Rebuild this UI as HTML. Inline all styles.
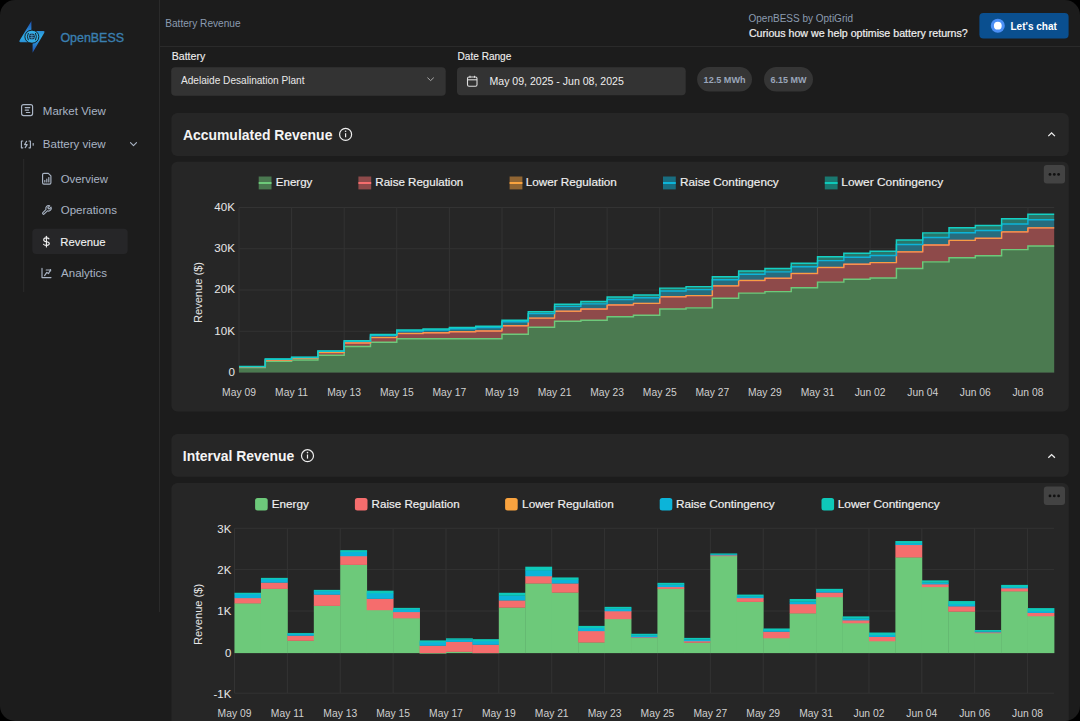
<!DOCTYPE html>
<html><head><meta charset="utf-8">
<style>
html,body{margin:0;padding:0;background:#000;width:1080px;height:721px;overflow:hidden;}
#app{position:absolute;left:0;top:0;width:1080px;height:721px;border-radius:15px;overflow:hidden;background:#1c1c1c;font-family:"Liberation Sans", sans-serif;}
svg{position:absolute;left:0;top:0;}
svg text{font-family:"Liberation Sans", sans-serif;}
</style></head><body>
<div id="app">
<svg width="1080" height="721" viewBox="0 0 1080 721">
<!-- sidebar -->
<rect x="159" y="0" width="1" height="612" fill="#2a2a2a"/>
<rect x="160" y="46" width="920" height="1" fill="#2a2a2a"/>
<!-- logo -->
<defs>
<linearGradient id="lg" x1="0" y1="0" x2="0" y2="1">
<stop offset="0" stop-color="#1c4cb0"/><stop offset="0.45" stop-color="#2ea6e2"/><stop offset="0.55" stop-color="#2ea6e2"/><stop offset="1" stop-color="#1c4cb0"/>
</linearGradient>
<radialGradient id="lg2"><stop offset="0" stop-color="#3ab4ea"/><stop offset="1" stop-color="#1f78c8"/></radialGradient>
</defs>
<path d="M31.4,21 L31.4,31 L43.4,31 Q45.2,31.2 44.3,32.8 L32.6,52.8 L32.6,42.2 L20.4,42.2 Q18.7,42 19.6,40.4 Z" fill="url(#lg)"/>
<rect x="24.9" y="30.3" width="13.9" height="12.8" rx="6.4" fill="#33ade6" stroke="#141414" stroke-width="0.9"/>
<path d="M28.4,33 Q26.4,36.6 28.4,40.2" fill="none" stroke="#141414" stroke-width="0.9"/>
<path d="M35.4,33 Q37.4,36.6 35.4,40.2" fill="none" stroke="#141414" stroke-width="0.9"/>
<circle cx="31.9" cy="36.6" r="3.0" fill="#12304d"/>
<g stroke="#5fb6e0" stroke-width="0.6" fill="none">
<path d="M31.9,33.2 L31.9,40 M29.4,35.6 L34.4,35.6 M29.4,37.6 L34.4,37.6"/>
</g>
<text x="60.4" y="42.1" fill="#3a7fb0" stroke="#3a7fb0" stroke-width="0.35" font-size="12.9" textLength="63.6" lengthAdjust="spacingAndGlyphs">OpenBESS</text>

<!-- nav -->
<g fill="none" stroke="#a9b4c4" stroke-width="1.15" stroke-linecap="round" stroke-linejoin="round">
<rect x="21.6" y="104.6" width="11" height="11" rx="2"/>
<line x1="25.2" y1="107.6" x2="29.8" y2="107.6"/><line x1="25.2" y1="110.1" x2="28.6" y2="110.1"/><line x1="26.3" y1="112.5" x2="29.8" y2="112.5"/>
<!-- battery view icon -->
<path d="M22.8,141 L21.4,141 L21.4,147.8 L22.8,147.8"/>
<path d="M29,141 L30.4,141 L30.4,147.8 L29,147.8"/>
<path d="M26.6,141.3 L24.6,144.6 L27.2,144.6 L25.2,147.6"/>
<line x1="33.2" y1="143.6" x2="33.2" y2="145.2"/>
<path d="M130.5,142.6 L133.5,145.6 L136.5,142.6"/>
<!-- overview icon -->
<path d="M42.6,174.6 Q42.6,173.3 43.9,173.3 L48.3,173.3 L50.9,175.9 L50.9,182.8 Q50.9,184.1 49.6,184.1 L43.9,184.1 Q42.6,184.1 42.6,182.8 Z"/>
<line x1="44.8" y1="182" x2="44.8" y2="180.6"/><line x1="46.8" y1="182" x2="46.8" y2="179"/><line x1="48.8" y1="182" x2="48.8" y2="177.6"/>
<!-- wrench -->
<g transform="translate(41.2 204.6) scale(0.46)"><path d="M14.7 6.3a1 1 0 0 0 0 1.4l1.6 1.6a1 1 0 0 0 1.4 0l3.77-3.77a6 6 0 0 1-7.94 7.94l-6.91 6.91a2.12 2.12 0 0 1-3-3l6.91-6.91a6 6 0 0 1 7.94-7.94l-3.76 3.76z" stroke-width="2.4"/></g>
<!-- analytics -->
<path d="M42,268.4 L42,277.6 L51,277.6"/>
<path d="M44.6,275.6 L46.8,272.4 L48.6,273.6 L50.6,269.6"/>
<path d="M46.2,270 L50.6,270 L50.6,271"/>
</g>
<line x1="23.7" y1="159" x2="23.7" y2="292" stroke="#2a2a2a" stroke-width="1"/>
<rect x="32.3" y="228.8" width="95.4" height="25.2" rx="4" fill="#262628"/>
<g fill="none" stroke="#f2f2f2" stroke-width="1.1" stroke-linecap="round"><line x1="46.4" y1="236.3" x2="46.4" y2="247"/><path d="M49,238.9 Q48.3,237.9 46.4,237.9 Q43.7,237.9 43.7,239.8 Q43.7,241.6 46.4,241.7 Q49.3,241.8 49.3,243.6 Q49.3,245.4 46.4,245.4 Q44.2,245.4 43.5,244.3"/></g>
<g fill="#a9b4c4">
<text x="42.8" y="114.7" font-size="11.5">Market View</text>
<text x="42.8" y="148.4" font-size="11.55">Battery view</text>
<text x="60.7" y="183" font-size="11.35">Overview</text>
<text x="60.7" y="214" font-size="11.5">Operations</text>
<text x="61.1" y="277.2" font-size="11.5">Analytics</text>
</g>
<text x="60.3" y="245.75" fill="#f2f2f2" stroke="#f2f2f2" stroke-width="0.1" font-size="11.3">Revenue</text>

<!-- header -->
<text x="165.2" y="26.8" fill="#8b9bb0" font-size="10.15">Battery Revenue</text>
<text x="748.5" y="22.3" fill="#8b9bb0" font-size="10.0">OpenBESS by OptiGrid</text>
<text x="748.9" y="36.6" fill="#f0f0f0" stroke="#f0f0f0" stroke-width="0.2" font-size="10.6" textLength="218.9" lengthAdjust="spacingAndGlyphs">Curious how we help optimise battery returns?</text>
<rect x="979.4" y="13.1" width="89.2" height="25.5" rx="4" fill="#0a4f8f"/>
<circle cx="997.8" cy="25.7" r="7.0" fill="#4b8ff5"/>
<circle cx="997.8" cy="25.7" r="3.9" fill="#ffffff"/>
<text x="1010.5" y="30" fill="#ffffff" font-size="10" font-weight="bold">Let's chat</text>

<!-- filters -->
<text x="171.7" y="59.8" fill="#eeeeee" stroke="#eeeeee" stroke-width="0.12" font-size="10.5" textLength="33.6" lengthAdjust="spacingAndGlyphs">Battery</text>
<text x="457.6" y="59.8" fill="#eeeeee" stroke="#eeeeee" stroke-width="0.12" font-size="10.5" textLength="53.7" lengthAdjust="spacingAndGlyphs">Date Range</text>
<rect x="171.2" y="67.2" width="274.5" height="28.5" rx="4" fill="#333333"/>
<text x="181" y="84.4" fill="#e8e8e8" font-size="10.1">Adelaide Desalination Plant</text>
<path d="M427.4,77.6 L430.6,80.6 L433.8,77.6" fill="none" stroke="#b0b0b0" stroke-width="0.95"/>
<rect x="457" y="67.3" width="228.7" height="28" rx="4" fill="#333333"/>
<g fill="none" stroke="#dddddd" stroke-width="1.1">
<rect x="467.5" y="77" width="9.5" height="9.2" rx="1.5"/>
<line x1="467.5" y1="79.8" x2="477" y2="79.8"/>
<line x1="470" y1="75.8" x2="470" y2="77.8"/><line x1="474.5" y1="75.8" x2="474.5" y2="77.8"/>
</g>
<text x="489.5" y="85.2" fill="#eeeeee" font-size="10.55">May 09, 2025 - Jun 08, 2025</text>
<rect x="697.1" y="67.1" width="54.9" height="24.4" rx="12.2" fill="#353535"/>
<rect x="764" y="67.1" width="49" height="24.4" rx="12.2" fill="#353535"/>
<text x="703.6" y="83.1" fill="#9aa6ba" font-size="9.1" font-weight="bold">12.5 MWh</text>
<text x="770.4" y="83.1" fill="#9aa6ba" font-size="9.0" font-weight="bold">6.15 MW</text>

<!-- card 1 -->
<rect x="171.4" y="113" width="897.4" height="42.9" rx="6" fill="#262626"/>
<text x="182.9" y="139.6" fill="#f4f4f4" font-size="13.95" font-weight="bold">Accumulated Revenue</text>
<g fill="none" stroke="#eeeeee" stroke-width="1.2"><circle cx="345.6" cy="134.4" r="6"/><line x1="345.6" y1="133.2" x2="345.6" y2="137.3"/></g>
<circle cx="345.6" cy="131.3" r="0.8" fill="#eeeeee"/>
<path d="M1048.3,136.1 L1051.6,132.9 L1054.9,136.1" fill="none" stroke="#eeeeee" stroke-width="1.3"/>
<rect x="171.4" y="161.7" width="897.4" height="249.9" rx="6" fill="#262626"/>
<rect x="1043.8" y="165" width="21.2" height="18.6" rx="3" fill="#434343"/>
<g fill="#111"><circle cx="1050" cy="174.4" r="1.4"/><circle cx="1054.3" cy="174.4" r="1.4"/><circle cx="1058.6" cy="174.4" r="1.4"/></g>
<rect x="258.7" y="176.5" width="12.8" height="12.9" fill="#6dc97a" fill-opacity="0.5"/>
<rect x="258.7" y="182" width="12.8" height="2" fill="#6dc97a"/>
<text x="275.8" y="186.4" fill="#f0f0f0" stroke="#f0f0f0" stroke-width="0.18" font-size="11.5" textLength="36.5" lengthAdjust="spacingAndGlyphs">Energy</text>
<rect x="358.4" y="176.5" width="12.8" height="12.9" fill="#f56d6d" fill-opacity="0.5"/>
<rect x="358.4" y="182" width="12.8" height="2" fill="#f56d6d"/>
<text x="375.3" y="186.4" fill="#f0f0f0" stroke="#f0f0f0" stroke-width="0.18" font-size="11.5" textLength="88.0" lengthAdjust="spacingAndGlyphs">Raise Regulation</text>
<rect x="509.6" y="176.5" width="12.8" height="12.9" fill="#f9a33f" fill-opacity="0.5"/>
<rect x="509.6" y="182" width="12.8" height="2" fill="#f9a33f"/>
<text x="525.7" y="186.4" fill="#f0f0f0" stroke="#f0f0f0" stroke-width="0.18" font-size="11.5" textLength="91.2" lengthAdjust="spacingAndGlyphs">Lower Regulation</text>
<rect x="663" y="176.5" width="12.8" height="12.9" fill="#0cb4d9" fill-opacity="0.5"/>
<rect x="663" y="182" width="12.8" height="2" fill="#0cb4d9"/>
<text x="680" y="186.4" fill="#f0f0f0" stroke="#f0f0f0" stroke-width="0.18" font-size="11.5" textLength="98.7" lengthAdjust="spacingAndGlyphs">Raise Contingency</text>
<rect x="824.8" y="176.5" width="12.8" height="12.9" fill="#0ec9b9" fill-opacity="0.5"/>
<rect x="824.8" y="182" width="12.8" height="2" fill="#0ec9b9"/>
<text x="841.3" y="186.4" fill="#f0f0f0" stroke="#f0f0f0" stroke-width="0.18" font-size="11.5" textLength="101.8" lengthAdjust="spacingAndGlyphs">Lower Contingency</text>
<line x1="239.0" y1="207.5" x2="1054.2" y2="207.5" stroke="#333333" stroke-width="1"/>
<line x1="239.0" y1="248.75" x2="1054.2" y2="248.75" stroke="#333333" stroke-width="1"/>
<line x1="239.0" y1="290" x2="1054.2" y2="290" stroke="#333333" stroke-width="1"/>
<line x1="239.0" y1="331.25" x2="1054.2" y2="331.25" stroke="#333333" stroke-width="1"/>
<line x1="239.0" y1="372.5" x2="1054.2" y2="372.5" stroke="#333333" stroke-width="1"/>
<line x1="239" y1="207.5" x2="239" y2="372.5" stroke="#333333" stroke-width="1"/>
<line x1="291.59" y1="207.5" x2="291.59" y2="372.5" stroke="#333333" stroke-width="1"/>
<line x1="344.19" y1="207.5" x2="344.19" y2="372.5" stroke="#333333" stroke-width="1"/>
<line x1="396.78" y1="207.5" x2="396.78" y2="372.5" stroke="#333333" stroke-width="1"/>
<line x1="449.37" y1="207.5" x2="449.37" y2="372.5" stroke="#333333" stroke-width="1"/>
<line x1="501.97" y1="207.5" x2="501.97" y2="372.5" stroke="#333333" stroke-width="1"/>
<line x1="554.56" y1="207.5" x2="554.56" y2="372.5" stroke="#333333" stroke-width="1"/>
<line x1="607.15" y1="207.5" x2="607.15" y2="372.5" stroke="#333333" stroke-width="1"/>
<line x1="659.75" y1="207.5" x2="659.75" y2="372.5" stroke="#333333" stroke-width="1"/>
<line x1="712.34" y1="207.5" x2="712.34" y2="372.5" stroke="#333333" stroke-width="1"/>
<line x1="764.94" y1="207.5" x2="764.94" y2="372.5" stroke="#333333" stroke-width="1"/>
<line x1="817.53" y1="207.5" x2="817.53" y2="372.5" stroke="#333333" stroke-width="1"/>
<line x1="870.12" y1="207.5" x2="870.12" y2="372.5" stroke="#333333" stroke-width="1"/>
<line x1="922.72" y1="207.5" x2="922.72" y2="372.5" stroke="#333333" stroke-width="1"/>
<line x1="975.31" y1="207.5" x2="975.31" y2="372.5" stroke="#333333" stroke-width="1"/>
<line x1="1027.9" y1="207.5" x2="1027.9" y2="372.5" stroke="#333333" stroke-width="1"/>
<path d="M239,367.55 L265.3,367.55 L265.3,361.16 L291.59,361.16 L291.59,359.93 L317.89,359.93 L317.89,355.23 L344.19,355.23 L344.19,346.44 L370.48,346.44 L370.48,342.17 L396.78,342.17 L396.78,338.7 L423.08,338.7 L423.08,338.79 L449.37,338.79 L449.37,338.66 L475.67,338.66 L475.67,338.7 L501.97,338.7 L501.97,334.18 L528.26,334.18 L528.26,327.25 L554.56,327.25 L554.56,321.23 L580.86,321.23 L580.86,320.17 L607.15,320.17 L607.15,316.79 L633.45,316.79 L633.45,315.29 L659.75,315.29 L659.75,308.9 L686.05,308.9 L686.05,307.87 L712.34,307.87 L712.34,298.21 L738.64,298.21 L738.64,293.11 L764.94,293.11 L764.94,291.64 L791.23,291.64 L791.23,287.69 L817.53,287.69 L817.53,282.12 L843.83,282.12 L843.83,279.15 L870.12,279.15 L870.12,277.97 L896.42,277.97 L896.42,268.44 L922.72,268.44 L922.72,261.87 L949.01,261.87 L949.01,257.74 L975.31,257.74 L975.31,255.77 L1001.61,255.77 L1001.61,249.62 L1027.9,249.62 L1027.9,245.95 L1054.2,245.95 L1054.2,372.5 L1027.9,372.5 L1027.9,372.5 L1001.61,372.5 L1001.61,372.5 L975.31,372.5 L975.31,372.5 L949.01,372.5 L949.01,372.5 L922.72,372.5 L922.72,372.5 L896.42,372.5 L896.42,372.5 L870.12,372.5 L870.12,372.5 L843.83,372.5 L843.83,372.5 L817.53,372.5 L817.53,372.5 L791.23,372.5 L791.23,372.5 L764.94,372.5 L764.94,372.5 L738.64,372.5 L738.64,372.5 L712.34,372.5 L712.34,372.5 L686.05,372.5 L686.05,372.5 L659.75,372.5 L659.75,372.5 L633.45,372.5 L633.45,372.5 L607.15,372.5 L607.15,372.5 L580.86,372.5 L580.86,372.5 L554.56,372.5 L554.56,372.5 L528.26,372.5 L528.26,372.5 L501.97,372.5 L501.97,372.5 L475.67,372.5 L475.67,372.5 L449.37,372.5 L449.37,372.5 L423.08,372.5 L423.08,372.5 L396.78,372.5 L396.78,372.5 L370.48,372.5 L370.48,372.5 L344.19,372.5 L344.19,372.5 L317.89,372.5 L317.89,372.5 L291.59,372.5 L291.59,372.5 L265.3,372.5 L265.3,372.5 L239,372.5Z" fill="#4b7a50"/>
<path d="M239,367.04 L265.3,367.04 L265.3,360.04 L291.59,360.04 L291.59,358.33 L317.89,358.33 L317.89,352.54 L344.19,352.54 L344.19,342.91 L370.48,342.91 L370.48,337.54 L396.78,337.54 L396.78,333.47 L423.08,333.47 L423.08,332.84 L449.37,332.84 L449.37,331.75 L475.67,331.75 L475.67,330.99 L501.97,330.99 L501.97,325.77 L528.26,325.77 L528.26,318.14 L554.56,318.14 L554.56,311.23 L580.86,311.23 L580.86,309.07 L607.15,309.07 L607.15,304.92 L633.45,304.92 L633.45,303.36 L659.75,303.36 L659.75,296.79 L686.05,296.79 L686.05,295.61 L712.34,295.61 L712.34,285.88 L738.64,285.88 L738.64,280.42 L764.94,280.42 L764.94,278.31 L791.23,278.31 L791.23,273.46 L817.53,273.46 L817.53,267.45 L843.83,267.45 L843.83,264.2 L870.12,264.2 L870.12,262.6 L896.42,262.6 L896.42,251.87 L922.72,251.87 L922.72,245.03 L949.01,245.03 L949.01,240.39 L975.31,240.39 L975.31,238.33 L1001.61,238.33 L1001.61,231.89 L1027.9,231.89 L1027.9,227.89 L1054.2,227.89 L1054.2,245.95 L1027.9,245.95 L1027.9,249.62 L1001.61,249.62 L1001.61,255.77 L975.31,255.77 L975.31,257.74 L949.01,257.74 L949.01,261.87 L922.72,261.87 L922.72,268.44 L896.42,268.44 L896.42,277.97 L870.12,277.97 L870.12,279.15 L843.83,279.15 L843.83,282.12 L817.53,282.12 L817.53,287.69 L791.23,287.69 L791.23,291.64 L764.94,291.64 L764.94,293.11 L738.64,293.11 L738.64,298.21 L712.34,298.21 L712.34,307.87 L686.05,307.87 L686.05,308.9 L659.75,308.9 L659.75,315.29 L633.45,315.29 L633.45,316.79 L607.15,316.79 L607.15,320.17 L580.86,320.17 L580.86,321.23 L554.56,321.23 L554.56,327.25 L528.26,327.25 L528.26,334.18 L501.97,334.18 L501.97,338.7 L475.67,338.7 L475.67,338.66 L449.37,338.66 L449.37,338.79 L423.08,338.79 L423.08,338.7 L396.78,338.7 L396.78,342.17 L370.48,342.17 L370.48,346.44 L344.19,346.44 L344.19,355.23 L317.89,355.23 L317.89,359.93 L291.59,359.93 L291.59,361.16 L265.3,361.16 L265.3,367.55 L239,367.55Z" fill="#8e4a4a"/>
<path d="M239,367.04 L265.3,367.04 L265.3,360.04 L291.59,360.04 L291.59,358.33 L317.89,358.33 L317.89,352.54 L344.19,352.54 L344.19,342.91 L370.48,342.91 L370.48,337.54 L396.78,337.54 L396.78,333.47 L423.08,333.47 L423.08,332.84 L449.37,332.84 L449.37,331.75 L475.67,331.75 L475.67,330.99 L501.97,330.99 L501.97,325.77 L528.26,325.77 L528.26,318.14 L554.56,318.14 L554.56,311.23 L580.86,311.23 L580.86,309.07 L607.15,309.07 L607.15,304.92 L633.45,304.92 L633.45,303.36 L659.75,303.36 L659.75,296.79 L686.05,296.79 L686.05,295.61 L712.34,295.61 L712.34,285.88 L738.64,285.88 L738.64,280.42 L764.94,280.42 L764.94,278.31 L791.23,278.31 L791.23,273.46 L817.53,273.46 L817.53,267.45 L843.83,267.45 L843.83,264.2 L870.12,264.2 L870.12,262.6 L896.42,262.6 L896.42,251.87 L922.72,251.87 L922.72,245.03 L949.01,245.03 L949.01,240.39 L975.31,240.39 L975.31,238.33 L1001.61,238.33 L1001.61,231.89 L1027.9,231.89 L1027.9,227.89 L1054.2,227.89 L1054.2,227.89 L1027.9,227.89 L1027.9,231.89 L1001.61,231.89 L1001.61,238.33 L975.31,238.33 L975.31,240.39 L949.01,240.39 L949.01,245.03 L922.72,245.03 L922.72,251.87 L896.42,251.87 L896.42,262.6 L870.12,262.6 L870.12,264.2 L843.83,264.2 L843.83,267.45 L817.53,267.45 L817.53,273.46 L791.23,273.46 L791.23,278.31 L764.94,278.31 L764.94,280.42 L738.64,280.42 L738.64,285.88 L712.34,285.88 L712.34,295.61 L686.05,295.61 L686.05,296.79 L659.75,296.79 L659.75,303.36 L633.45,303.36 L633.45,304.92 L607.15,304.92 L607.15,309.07 L580.86,309.07 L580.86,311.23 L554.56,311.23 L554.56,318.14 L528.26,318.14 L528.26,325.77 L501.97,325.77 L501.97,330.99 L475.67,330.99 L475.67,331.75 L449.37,331.75 L449.37,332.84 L423.08,332.84 L423.08,333.47 L396.78,333.47 L396.78,337.54 L370.48,337.54 L370.48,342.91 L344.19,342.91 L344.19,352.54 L317.89,352.54 L317.89,358.33 L291.59,358.33 L291.59,360.04 L265.3,360.04 L265.3,367.04 L239,367.04Z" fill="#8f6636"/>
<path d="M239,366.64 L265.3,366.64 L265.3,359.3 L291.59,359.3 L291.59,357.4 L317.89,357.4 L317.89,351.27 L344.19,351.27 L344.19,341.22 L370.48,341.22 L370.48,335.29 L396.78,335.29 L396.78,330.95 L423.08,330.95 L423.08,329.97 L449.37,329.97 L449.37,328.66 L475.67,328.66 L475.67,327.54 L501.97,327.54 L501.97,321.84 L528.26,321.84 L528.26,313.62 L554.56,313.62 L554.56,306.35 L580.86,306.35 L580.86,303.89 L607.15,303.89 L607.15,299.5 L633.45,299.5 L633.45,297.75 L659.75,297.75 L659.75,290.95 L686.05,290.95 L686.05,289.61 L712.34,289.61 L712.34,279.79 L738.64,279.79 L738.64,274.15 L764.94,274.15 L764.94,271.89 L791.23,271.89 L791.23,266.79 L817.53,266.79 L817.53,260.61 L843.83,260.61 L843.83,257.19 L870.12,257.19 L870.12,255.4 L896.42,255.4 L896.42,244.5 L922.72,244.5 L922.72,237.49 L949.01,237.49 L949.01,232.65 L975.31,232.65 L975.31,230.5 L1001.61,230.5 L1001.61,223.93 L1027.9,223.93 L1027.9,219.77 L1054.2,219.77 L1054.2,227.89 L1027.9,227.89 L1027.9,231.89 L1001.61,231.89 L1001.61,238.33 L975.31,238.33 L975.31,240.39 L949.01,240.39 L949.01,245.03 L922.72,245.03 L922.72,251.87 L896.42,251.87 L896.42,262.6 L870.12,262.6 L870.12,264.2 L843.83,264.2 L843.83,267.45 L817.53,267.45 L817.53,273.46 L791.23,273.46 L791.23,278.31 L764.94,278.31 L764.94,280.42 L738.64,280.42 L738.64,285.88 L712.34,285.88 L712.34,295.61 L686.05,295.61 L686.05,296.79 L659.75,296.79 L659.75,303.36 L633.45,303.36 L633.45,304.92 L607.15,304.92 L607.15,309.07 L580.86,309.07 L580.86,311.23 L554.56,311.23 L554.56,318.14 L528.26,318.14 L528.26,325.77 L501.97,325.77 L501.97,330.99 L475.67,330.99 L475.67,331.75 L449.37,331.75 L449.37,332.84 L423.08,332.84 L423.08,333.47 L396.78,333.47 L396.78,337.54 L370.48,337.54 L370.48,342.91 L344.19,342.91 L344.19,352.54 L317.89,352.54 L317.89,358.33 L291.59,358.33 L291.59,360.04 L265.3,360.04 L265.3,367.04 L239,367.04Z" fill="#276c7e"/>
<path d="M239,366.53 L265.3,366.53 L265.3,359.08 L291.59,359.08 L291.59,357.12 L317.89,357.12 L317.89,350.88 L344.19,350.88 L344.19,340.67 L370.48,340.67 L370.48,334.51 L396.78,334.51 L396.78,330.05 L423.08,330.05 L423.08,328.91 L449.37,328.91 L449.37,327.49 L475.67,327.49 L475.67,326.19 L501.97,326.19 L501.97,320.23 L528.26,320.23 L528.26,311.67 L554.56,311.67 L554.56,304.18 L580.86,304.18 L580.86,301.53 L607.15,301.53 L607.15,296.97 L633.45,296.97 L633.45,295.07 L659.75,295.07 L659.75,288.11 L686.05,288.11 L686.05,286.63 L712.34,286.63 L712.34,276.73 L738.64,276.73 L738.64,270.94 L764.94,270.94 L764.94,268.53 L791.23,268.53 L791.23,263.19 L817.53,263.19 L817.53,256.83 L843.83,256.83 L843.83,253.2 L870.12,253.2 L870.12,251.19 L896.42,251.19 L896.42,240.09 L922.72,240.09 L922.72,232.88 L949.01,232.88 L949.01,227.73 L975.31,227.73 L975.31,225.47 L1001.61,225.47 L1001.61,218.71 L1027.9,218.71 L1027.9,214.26 L1054.2,214.26 L1054.2,219.77 L1027.9,219.77 L1027.9,223.93 L1001.61,223.93 L1001.61,230.5 L975.31,230.5 L975.31,232.65 L949.01,232.65 L949.01,237.49 L922.72,237.49 L922.72,244.5 L896.42,244.5 L896.42,255.4 L870.12,255.4 L870.12,257.19 L843.83,257.19 L843.83,260.61 L817.53,260.61 L817.53,266.79 L791.23,266.79 L791.23,271.89 L764.94,271.89 L764.94,274.15 L738.64,274.15 L738.64,279.79 L712.34,279.79 L712.34,289.61 L686.05,289.61 L686.05,290.95 L659.75,290.95 L659.75,297.75 L633.45,297.75 L633.45,299.5 L607.15,299.5 L607.15,303.89 L580.86,303.89 L580.86,306.35 L554.56,306.35 L554.56,313.62 L528.26,313.62 L528.26,321.84 L501.97,321.84 L501.97,327.54 L475.67,327.54 L475.67,328.66 L449.37,328.66 L449.37,329.97 L423.08,329.97 L423.08,330.95 L396.78,330.95 L396.78,335.29 L370.48,335.29 L370.48,341.22 L344.19,341.22 L344.19,351.27 L317.89,351.27 L317.89,357.4 L291.59,357.4 L291.59,359.3 L265.3,359.3 L265.3,366.64 L239,366.64Z" fill="#29766a"/>
<path d="M239,367.55 L265.3,367.55 L265.3,361.16 L291.59,361.16 L291.59,359.93 L317.89,359.93 L317.89,355.23 L344.19,355.23 L344.19,346.44 L370.48,346.44 L370.48,342.17 L396.78,342.17 L396.78,338.7 L423.08,338.7 L423.08,338.79 L449.37,338.79 L449.37,338.66 L475.67,338.66 L475.67,338.7 L501.97,338.7 L501.97,334.18 L528.26,334.18 L528.26,327.25 L554.56,327.25 L554.56,321.23 L580.86,321.23 L580.86,320.17 L607.15,320.17 L607.15,316.79 L633.45,316.79 L633.45,315.29 L659.75,315.29 L659.75,308.9 L686.05,308.9 L686.05,307.87 L712.34,307.87 L712.34,298.21 L738.64,298.21 L738.64,293.11 L764.94,293.11 L764.94,291.64 L791.23,291.64 L791.23,287.69 L817.53,287.69 L817.53,282.12 L843.83,282.12 L843.83,279.15 L870.12,279.15 L870.12,277.97 L896.42,277.97 L896.42,268.44 L922.72,268.44 L922.72,261.87 L949.01,261.87 L949.01,257.74 L975.31,257.74 L975.31,255.77 L1001.61,255.77 L1001.61,249.62 L1027.9,249.62 L1027.9,245.95 L1054.2,245.95" fill="none" stroke="#6dc97a" stroke-width="1.45"/>
<path d="M239,367.04 L265.3,367.04 L265.3,360.04 L291.59,360.04 L291.59,358.33 L317.89,358.33 L317.89,352.54 L344.19,352.54 L344.19,342.91 L370.48,342.91 L370.48,337.54 L396.78,337.54 L396.78,333.47 L423.08,333.47 L423.08,332.84 L449.37,332.84 L449.37,331.75 L475.67,331.75 L475.67,330.99 L501.97,330.99 L501.97,325.77 L528.26,325.77 L528.26,318.14 L554.56,318.14 L554.56,311.23 L580.86,311.23 L580.86,309.07 L607.15,309.07 L607.15,304.92 L633.45,304.92 L633.45,303.36 L659.75,303.36 L659.75,296.79 L686.05,296.79 L686.05,295.61 L712.34,295.61 L712.34,285.88 L738.64,285.88 L738.64,280.42 L764.94,280.42 L764.94,278.31 L791.23,278.31 L791.23,273.46 L817.53,273.46 L817.53,267.45 L843.83,267.45 L843.83,264.2 L870.12,264.2 L870.12,262.6 L896.42,262.6 L896.42,251.87 L922.72,251.87 L922.72,245.03 L949.01,245.03 L949.01,240.39 L975.31,240.39 L975.31,238.33 L1001.61,238.33 L1001.61,231.89 L1027.9,231.89 L1027.9,227.89 L1054.2,227.89" fill="none" stroke="#f56d6d" stroke-width="1.45"/>
<path d="M239,367.04 L265.3,367.04 L265.3,360.04 L291.59,360.04 L291.59,358.33 L317.89,358.33 L317.89,352.54 L344.19,352.54 L344.19,342.91 L370.48,342.91 L370.48,337.54 L396.78,337.54 L396.78,333.47 L423.08,333.47 L423.08,332.84 L449.37,332.84 L449.37,331.75 L475.67,331.75 L475.67,330.99 L501.97,330.99 L501.97,325.77 L528.26,325.77 L528.26,318.14 L554.56,318.14 L554.56,311.23 L580.86,311.23 L580.86,309.07 L607.15,309.07 L607.15,304.92 L633.45,304.92 L633.45,303.36 L659.75,303.36 L659.75,296.79 L686.05,296.79 L686.05,295.61 L712.34,295.61 L712.34,285.88 L738.64,285.88 L738.64,280.42 L764.94,280.42 L764.94,278.31 L791.23,278.31 L791.23,273.46 L817.53,273.46 L817.53,267.45 L843.83,267.45 L843.83,264.2 L870.12,264.2 L870.12,262.6 L896.42,262.6 L896.42,251.87 L922.72,251.87 L922.72,245.03 L949.01,245.03 L949.01,240.39 L975.31,240.39 L975.31,238.33 L1001.61,238.33 L1001.61,231.89 L1027.9,231.89 L1027.9,227.89 L1054.2,227.89" fill="none" stroke="#f9a33f" stroke-width="1.0"/>
<path d="M239,366.64 L265.3,366.64 L265.3,359.3 L291.59,359.3 L291.59,357.4 L317.89,357.4 L317.89,351.27 L344.19,351.27 L344.19,341.22 L370.48,341.22 L370.48,335.29 L396.78,335.29 L396.78,330.95 L423.08,330.95 L423.08,329.97 L449.37,329.97 L449.37,328.66 L475.67,328.66 L475.67,327.54 L501.97,327.54 L501.97,321.84 L528.26,321.84 L528.26,313.62 L554.56,313.62 L554.56,306.35 L580.86,306.35 L580.86,303.89 L607.15,303.89 L607.15,299.5 L633.45,299.5 L633.45,297.75 L659.75,297.75 L659.75,290.95 L686.05,290.95 L686.05,289.61 L712.34,289.61 L712.34,279.79 L738.64,279.79 L738.64,274.15 L764.94,274.15 L764.94,271.89 L791.23,271.89 L791.23,266.79 L817.53,266.79 L817.53,260.61 L843.83,260.61 L843.83,257.19 L870.12,257.19 L870.12,255.4 L896.42,255.4 L896.42,244.5 L922.72,244.5 L922.72,237.49 L949.01,237.49 L949.01,232.65 L975.31,232.65 L975.31,230.5 L1001.61,230.5 L1001.61,223.93 L1027.9,223.93 L1027.9,219.77 L1054.2,219.77" fill="none" stroke="#0cb4d9" stroke-width="1.45"/>
<path d="M239,366.53 L265.3,366.53 L265.3,359.08 L291.59,359.08 L291.59,357.12 L317.89,357.12 L317.89,350.88 L344.19,350.88 L344.19,340.67 L370.48,340.67 L370.48,334.51 L396.78,334.51 L396.78,330.05 L423.08,330.05 L423.08,328.91 L449.37,328.91 L449.37,327.49 L475.67,327.49 L475.67,326.19 L501.97,326.19 L501.97,320.23 L528.26,320.23 L528.26,311.67 L554.56,311.67 L554.56,304.18 L580.86,304.18 L580.86,301.53 L607.15,301.53 L607.15,296.97 L633.45,296.97 L633.45,295.07 L659.75,295.07 L659.75,288.11 L686.05,288.11 L686.05,286.63 L712.34,286.63 L712.34,276.73 L738.64,276.73 L738.64,270.94 L764.94,270.94 L764.94,268.53 L791.23,268.53 L791.23,263.19 L817.53,263.19 L817.53,256.83 L843.83,256.83 L843.83,253.2 L870.12,253.2 L870.12,251.19 L896.42,251.19 L896.42,240.09 L922.72,240.09 L922.72,232.88 L949.01,232.88 L949.01,227.73 L975.31,227.73 L975.31,225.47 L1001.61,225.47 L1001.61,218.71 L1027.9,218.71 L1027.9,214.26 L1054.2,214.26" fill="none" stroke="#14d0c4" stroke-width="1.45"/>
<text x="235" y="210.9" text-anchor="end" fill="#e6e6e6" font-size="11.6">40K</text>
<text x="235" y="252.15" text-anchor="end" fill="#e6e6e6" font-size="11.6">30K</text>
<text x="235" y="293.4" text-anchor="end" fill="#e6e6e6" font-size="11.6">20K</text>
<text x="235" y="334.65" text-anchor="end" fill="#e6e6e6" font-size="11.6">10K</text>
<text x="235" y="375.9" text-anchor="end" fill="#e6e6e6" font-size="11.6">0</text>
<text x="239" y="395.6" text-anchor="middle" fill="#d0d0d0" font-size="10.3">May 09</text>
<text x="291.59" y="395.6" text-anchor="middle" fill="#d0d0d0" font-size="10.3">May 11</text>
<text x="344.19" y="395.6" text-anchor="middle" fill="#d0d0d0" font-size="10.3">May 13</text>
<text x="396.78" y="395.6" text-anchor="middle" fill="#d0d0d0" font-size="10.3">May 15</text>
<text x="449.37" y="395.6" text-anchor="middle" fill="#d0d0d0" font-size="10.3">May 17</text>
<text x="501.97" y="395.6" text-anchor="middle" fill="#d0d0d0" font-size="10.3">May 19</text>
<text x="554.56" y="395.6" text-anchor="middle" fill="#d0d0d0" font-size="10.3">May 21</text>
<text x="607.15" y="395.6" text-anchor="middle" fill="#d0d0d0" font-size="10.3">May 23</text>
<text x="659.75" y="395.6" text-anchor="middle" fill="#d0d0d0" font-size="10.3">May 25</text>
<text x="712.34" y="395.6" text-anchor="middle" fill="#d0d0d0" font-size="10.3">May 27</text>
<text x="764.94" y="395.6" text-anchor="middle" fill="#d0d0d0" font-size="10.3">May 29</text>
<text x="817.53" y="395.6" text-anchor="middle" fill="#d0d0d0" font-size="10.3">May 31</text>
<text x="870.12" y="395.6" text-anchor="middle" fill="#d0d0d0" font-size="10.3">Jun 02</text>
<text x="922.72" y="395.6" text-anchor="middle" fill="#d0d0d0" font-size="10.3">Jun 04</text>
<text x="975.31" y="395.6" text-anchor="middle" fill="#d0d0d0" font-size="10.3">Jun 06</text>
<text x="1027.9" y="395.6" text-anchor="middle" fill="#d0d0d0" font-size="10.3">Jun 08</text>
<text transform="translate(201.6 292.5) rotate(-90)" text-anchor="middle" fill="#e6e6e6" font-size="11.1">Revenue ($)</text>

<!-- card 2 -->
<rect x="171.4" y="434" width="897.4" height="42.7" rx="6" fill="#262626"/>
<text x="182.8" y="460.8" fill="#f4f4f4" font-size="13.95" font-weight="bold">Interval Revenue</text>
<g fill="none" stroke="#eeeeee" stroke-width="1.2"><circle cx="307.5" cy="455.7" r="6"/><line x1="307.5" y1="454.5" x2="307.5" y2="458.6"/></g>
<circle cx="307.5" cy="452.6" r="0.8" fill="#eeeeee"/>
<path d="M1048.3,457.8 L1051.6,454.6 L1054.9,457.8" fill="none" stroke="#eeeeee" stroke-width="1.3"/>
<rect x="171.4" y="483" width="897.4" height="260" rx="6" fill="#262626"/>
<rect x="1043.8" y="486.5" width="21.2" height="18.6" rx="3" fill="#434343"/>
<g fill="#111"><circle cx="1050" cy="495.9" r="1.4"/><circle cx="1054.3" cy="495.9" r="1.4"/><circle cx="1058.6" cy="495.9" r="1.4"/></g>
<rect x="255.1" y="498.1" width="12.6" height="12.5" rx="2.5" fill="#6dc97a"/>
<text x="271.8" y="508" fill="#f0f0f0" stroke="#f0f0f0" stroke-width="0.18" font-size="11.5" textLength="37.0" lengthAdjust="spacingAndGlyphs">Energy</text>
<rect x="354.9" y="498.1" width="12.6" height="12.5" rx="2.5" fill="#f56d6d"/>
<text x="371.6" y="508" fill="#f0f0f0" stroke="#f0f0f0" stroke-width="0.18" font-size="11.5" textLength="88.1" lengthAdjust="spacingAndGlyphs">Raise Regulation</text>
<rect x="505.1" y="498.1" width="12.6" height="12.5" rx="2.5" fill="#f9a33f"/>
<text x="522.1" y="508" fill="#f0f0f0" stroke="#f0f0f0" stroke-width="0.18" font-size="11.5" textLength="91.7" lengthAdjust="spacingAndGlyphs">Lower Regulation</text>
<rect x="659.7" y="498.1" width="12.6" height="12.5" rx="2.5" fill="#0cb4d9"/>
<text x="675.9" y="508" fill="#f0f0f0" stroke="#f0f0f0" stroke-width="0.18" font-size="11.5" textLength="98.8" lengthAdjust="spacingAndGlyphs">Raise Contingency</text>
<rect x="821.5" y="498.1" width="12.6" height="12.5" rx="2.5" fill="#0ec9b9"/>
<text x="837.7" y="508" fill="#f0f0f0" stroke="#f0f0f0" stroke-width="0.18" font-size="11.5" textLength="101.9" lengthAdjust="spacingAndGlyphs">Lower Contingency</text>
<line x1="234.5" y1="528.3" x2="1054.0" y2="528.3" stroke="#333333" stroke-width="1"/>
<line x1="234.5" y1="569.6" x2="1054.0" y2="569.6" stroke="#333333" stroke-width="1"/>
<line x1="234.5" y1="611" x2="1054.0" y2="611" stroke="#333333" stroke-width="1"/>
<line x1="234.5" y1="652.8" x2="1054.0" y2="652.8" stroke="#333333" stroke-width="1"/>
<line x1="234.5" y1="693.2" x2="1054.0" y2="693.2" stroke="#333333" stroke-width="1"/>
<line x1="234.5" y1="528.3" x2="234.5" y2="693.2" stroke="#333333" stroke-width="1"/>
<line x1="287.37" y1="528.3" x2="287.37" y2="693.2" stroke="#333333" stroke-width="1"/>
<line x1="340.24" y1="528.3" x2="340.24" y2="693.2" stroke="#333333" stroke-width="1"/>
<line x1="393.11" y1="528.3" x2="393.11" y2="693.2" stroke="#333333" stroke-width="1"/>
<line x1="445.98" y1="528.3" x2="445.98" y2="693.2" stroke="#333333" stroke-width="1"/>
<line x1="498.85" y1="528.3" x2="498.85" y2="693.2" stroke="#333333" stroke-width="1"/>
<line x1="551.73" y1="528.3" x2="551.73" y2="693.2" stroke="#333333" stroke-width="1"/>
<line x1="604.6" y1="528.3" x2="604.6" y2="693.2" stroke="#333333" stroke-width="1"/>
<line x1="657.47" y1="528.3" x2="657.47" y2="693.2" stroke="#333333" stroke-width="1"/>
<line x1="710.34" y1="528.3" x2="710.34" y2="693.2" stroke="#333333" stroke-width="1"/>
<line x1="763.21" y1="528.3" x2="763.21" y2="693.2" stroke="#333333" stroke-width="1"/>
<line x1="816.08" y1="528.3" x2="816.08" y2="693.2" stroke="#333333" stroke-width="1"/>
<line x1="868.95" y1="528.3" x2="868.95" y2="693.2" stroke="#333333" stroke-width="1"/>
<line x1="921.82" y1="528.3" x2="921.82" y2="693.2" stroke="#333333" stroke-width="1"/>
<line x1="974.69" y1="528.3" x2="974.69" y2="693.2" stroke="#333333" stroke-width="1"/>
<line x1="1027.56" y1="528.3" x2="1027.56" y2="693.2" stroke="#333333" stroke-width="1"/>
<rect x="234.5" y="603.12" width="26.84" height="49.98" fill="#6dc97a"/>
<rect x="234.5" y="597.86" width="26.84" height="5.56" fill="#f56d6d"/>
<rect x="234.5" y="593.89" width="26.84" height="4.27" fill="#0cb4d9"/>
<rect x="234.5" y="592.77" width="26.84" height="1.42" fill="#0ec9b9"/>
<rect x="260.94" y="588.63" width="26.84" height="64.47" fill="#6dc97a"/>
<rect x="260.94" y="582.42" width="26.84" height="6.51" fill="#f56d6d"/>
<rect x="260.94" y="578.93" width="26.84" height="3.79" fill="#0cb4d9"/>
<rect x="260.94" y="577.87" width="26.84" height="1.36" fill="#0ec9b9"/>
<rect x="287.37" y="640.5" width="26.84" height="12.6" fill="#6dc97a"/>
<rect x="287.37" y="635.49" width="26.84" height="5.31" fill="#f56d6d"/>
<rect x="287.37" y="633.59" width="26.84" height="2.2" fill="#0cb4d9"/>
<rect x="287.37" y="632.97" width="26.84" height="0.92" fill="#0ec9b9"/>
<rect x="313.81" y="605.6" width="26.84" height="47.5" fill="#6dc97a"/>
<rect x="313.81" y="594.43" width="26.84" height="11.48" fill="#f56d6d"/>
<rect x="313.81" y="591.06" width="26.84" height="3.67" fill="#0cb4d9"/>
<rect x="313.81" y="589.87" width="26.84" height="1.48" fill="#0ec9b9"/>
<rect x="340.24" y="564.62" width="26.84" height="88.48" fill="#6dc97a"/>
<rect x="340.24" y="555.92" width="26.84" height="8.99" fill="#f56d6d"/>
<rect x="340.24" y="551.71" width="26.84" height="4.51" fill="#0cb4d9"/>
<rect x="340.24" y="550.13" width="26.84" height="1.88" fill="#0ec9b9"/>
<rect x="366.68" y="609.91" width="26.84" height="43.19" fill="#6dc97a"/>
<rect x="366.68" y="598.57" width="26.84" height="11.64" fill="#f56d6d"/>
<rect x="366.68" y="592.95" width="26.84" height="5.91" fill="#0cb4d9"/>
<rect x="366.68" y="590.7" width="26.84" height="2.55" fill="#0ec9b9"/>
<rect x="393.11" y="618.02" width="26.84" height="35.08" fill="#6dc97a"/>
<rect x="393.11" y="611.81" width="26.84" height="6.51" fill="#f56d6d"/>
<rect x="393.11" y="609.06" width="26.84" height="3.05" fill="#0cb4d9"/>
<rect x="393.11" y="607.88" width="26.84" height="1.48" fill="#0ec9b9"/>
<rect x="419.55" y="652.8" width="26.84" height="0.83" fill="#6dc97a"/>
<rect x="419.55" y="645.51" width="26.84" height="7.59" fill="#f56d6d"/>
<rect x="419.55" y="641.99" width="26.84" height="3.83" fill="#0cb4d9"/>
<rect x="419.55" y="640.38" width="26.84" height="1.91" fill="#0ec9b9"/>
<rect x="445.98" y="651.56" width="26.84" height="1.54" fill="#6dc97a"/>
<rect x="445.98" y="641.62" width="26.84" height="10.24" fill="#f56d6d"/>
<rect x="445.98" y="639.39" width="26.84" height="2.53" fill="#0cb4d9"/>
<rect x="445.98" y="638.31" width="26.84" height="1.38" fill="#0ec9b9"/>
<rect x="472.42" y="652.8" width="26.84" height="0.41" fill="#6dc97a"/>
<rect x="472.42" y="644.52" width="26.84" height="8.58" fill="#f56d6d"/>
<rect x="472.42" y="640.97" width="26.84" height="3.85" fill="#0cb4d9"/>
<rect x="472.42" y="639.14" width="26.84" height="2.13" fill="#0ec9b9"/>
<rect x="498.85" y="607.38" width="26.84" height="45.72" fill="#6dc97a"/>
<rect x="498.85" y="600.22" width="26.84" height="7.46" fill="#f56d6d"/>
<rect x="498.85" y="595.4" width="26.84" height="5.12" fill="#0cb4d9"/>
<rect x="498.85" y="592.77" width="26.84" height="2.93" fill="#0ec9b9"/>
<rect x="525.29" y="583.25" width="26.84" height="69.85" fill="#6dc97a"/>
<rect x="525.29" y="576" width="26.84" height="7.55" fill="#f56d6d"/>
<rect x="525.29" y="570.1" width="26.84" height="6.2" fill="#0cb4d9"/>
<rect x="525.29" y="566.69" width="26.84" height="3.72" fill="#0ec9b9"/>
<rect x="551.73" y="592.36" width="26.84" height="60.74" fill="#6dc97a"/>
<rect x="551.73" y="583.25" width="26.84" height="9.41" fill="#f56d6d"/>
<rect x="551.73" y="579.65" width="26.84" height="3.89" fill="#0cb4d9"/>
<rect x="551.73" y="577.45" width="26.84" height="2.5" fill="#0ec9b9"/>
<rect x="578.16" y="642.24" width="26.84" height="10.86" fill="#6dc97a"/>
<rect x="578.16" y="630.86" width="26.84" height="11.69" fill="#f56d6d"/>
<rect x="578.16" y="627.84" width="26.84" height="3.31" fill="#0cb4d9"/>
<rect x="578.16" y="625.89" width="26.84" height="2.25" fill="#0ec9b9"/>
<rect x="604.6" y="618.85" width="26.84" height="34.25" fill="#6dc97a"/>
<rect x="604.6" y="610.99" width="26.84" height="8.17" fill="#f56d6d"/>
<rect x="604.6" y="608.53" width="26.84" height="2.76" fill="#0cb4d9"/>
<rect x="604.6" y="606.85" width="26.84" height="1.98" fill="#0ec9b9"/>
<rect x="631.03" y="637.73" width="26.84" height="15.37" fill="#6dc97a"/>
<rect x="631.03" y="637.07" width="26.84" height="0.96" fill="#f56d6d"/>
<rect x="631.03" y="635.15" width="26.84" height="2.22" fill="#0cb4d9"/>
<rect x="631.03" y="633.76" width="26.84" height="1.69" fill="#0ec9b9"/>
<rect x="657.47" y="588.63" width="26.84" height="64.47" fill="#6dc97a"/>
<rect x="657.47" y="586.81" width="26.84" height="2.12" fill="#f56d6d"/>
<rect x="657.47" y="584.56" width="26.84" height="2.55" fill="#0cb4d9"/>
<rect x="657.47" y="582.83" width="26.84" height="2.02" fill="#0ec9b9"/>
<rect x="683.9" y="642.45" width="26.84" height="10.65" fill="#6dc97a"/>
<rect x="683.9" y="641" width="26.84" height="1.75" fill="#f56d6d"/>
<rect x="683.9" y="639.28" width="26.84" height="2.02" fill="#0cb4d9"/>
<rect x="683.9" y="637.9" width="26.84" height="1.69" fill="#0ec9b9"/>
<rect x="710.34" y="555.92" width="26.84" height="97.18" fill="#6dc97a"/>
<rect x="710.34" y="555.1" width="26.84" height="1.13" fill="#f56d6d"/>
<rect x="710.34" y="554.2" width="26.84" height="1.19" fill="#0cb4d9"/>
<rect x="710.34" y="553.44" width="26.84" height="1.06" fill="#0ec9b9"/>
<rect x="736.77" y="601.63" width="26.84" height="51.47" fill="#6dc97a"/>
<rect x="736.77" y="597.86" width="26.84" height="4.07" fill="#f56d6d"/>
<rect x="736.77" y="596.14" width="26.84" height="2.02" fill="#0cb4d9"/>
<rect x="736.77" y="594.59" width="26.84" height="1.85" fill="#0ec9b9"/>
<rect x="763.21" y="637.98" width="26.84" height="15.12" fill="#6dc97a"/>
<rect x="763.21" y="631.48" width="26.84" height="6.8" fill="#f56d6d"/>
<rect x="763.21" y="629.93" width="26.84" height="1.85" fill="#0cb4d9"/>
<rect x="763.21" y="628.46" width="26.84" height="1.77" fill="#0ec9b9"/>
<rect x="789.65" y="613.14" width="26.84" height="39.96" fill="#6dc97a"/>
<rect x="789.65" y="603.95" width="26.84" height="9.49" fill="#f56d6d"/>
<rect x="789.65" y="601.46" width="26.84" height="2.78" fill="#0cb4d9"/>
<rect x="789.65" y="598.98" width="26.84" height="2.78" fill="#0ec9b9"/>
<rect x="816.08" y="596.91" width="26.84" height="56.19" fill="#6dc97a"/>
<rect x="816.08" y="592.36" width="26.84" height="4.85" fill="#f56d6d"/>
<rect x="816.08" y="590.64" width="26.84" height="2.01" fill="#0cb4d9"/>
<rect x="816.08" y="588.84" width="26.84" height="2.11" fill="#0ec9b9"/>
<rect x="842.52" y="622.99" width="26.84" height="30.11" fill="#6dc97a"/>
<rect x="842.52" y="620.09" width="26.84" height="3.2" fill="#f56d6d"/>
<rect x="842.52" y="618.33" width="26.84" height="2.06" fill="#0cb4d9"/>
<rect x="842.52" y="616.37" width="26.84" height="2.26" fill="#0ec9b9"/>
<rect x="868.95" y="641" width="26.84" height="12.1" fill="#6dc97a"/>
<rect x="868.95" y="636.65" width="26.84" height="4.65" fill="#f56d6d"/>
<rect x="868.95" y="634.75" width="26.84" height="2.2" fill="#0cb4d9"/>
<rect x="868.95" y="632.51" width="26.84" height="2.54" fill="#0ec9b9"/>
<rect x="895.39" y="557.17" width="26.84" height="95.93" fill="#6dc97a"/>
<rect x="895.39" y="544.75" width="26.84" height="12.72" fill="#f56d6d"/>
<rect x="895.39" y="543.08" width="26.84" height="1.96" fill="#0cb4d9"/>
<rect x="895.39" y="541.02" width="26.84" height="2.36" fill="#0ec9b9"/>
<rect x="921.82" y="586.81" width="26.84" height="66.29" fill="#6dc97a"/>
<rect x="921.82" y="584.08" width="26.84" height="3.03" fill="#f56d6d"/>
<rect x="921.82" y="582.46" width="26.84" height="1.91" fill="#0cb4d9"/>
<rect x="921.82" y="580.35" width="26.84" height="2.41" fill="#0ec9b9"/>
<rect x="948.26" y="611.4" width="26.84" height="41.7" fill="#6dc97a"/>
<rect x="948.26" y="606.14" width="26.84" height="5.56" fill="#f56d6d"/>
<rect x="948.26" y="604" width="26.84" height="2.44" fill="#0cb4d9"/>
<rect x="948.26" y="601.05" width="26.84" height="3.25" fill="#0ec9b9"/>
<rect x="974.69" y="632.97" width="26.84" height="20.13" fill="#6dc97a"/>
<rect x="974.69" y="632.1" width="26.84" height="1.17" fill="#f56d6d"/>
<rect x="974.69" y="631.26" width="26.84" height="1.14" fill="#0cb4d9"/>
<rect x="974.69" y="630.03" width="26.84" height="1.53" fill="#0ec9b9"/>
<rect x="1001.13" y="591.11" width="26.84" height="61.99" fill="#6dc97a"/>
<rect x="1001.13" y="588.05" width="26.84" height="3.36" fill="#f56d6d"/>
<rect x="1001.13" y="586.81" width="26.84" height="1.54" fill="#0cb4d9"/>
<rect x="1001.13" y="584.9" width="26.84" height="2.21" fill="#0ec9b9"/>
<rect x="1027.56" y="615.95" width="26.84" height="37.15" fill="#6dc97a"/>
<rect x="1027.56" y="612.64" width="26.84" height="3.61" fill="#f56d6d"/>
<rect x="1027.56" y="610.91" width="26.84" height="2.03" fill="#0cb4d9"/>
<rect x="1027.56" y="608.09" width="26.84" height="3.12" fill="#0ec9b9"/>
<text x="231.3" y="532.6" text-anchor="end" fill="#e6e6e6" font-size="11.4">3K</text>
<text x="231.3" y="573.9" text-anchor="end" fill="#e6e6e6" font-size="11.4">2K</text>
<text x="231.3" y="615.3" text-anchor="end" fill="#e6e6e6" font-size="11.4">1K</text>
<text x="231.3" y="657.1" text-anchor="end" fill="#e6e6e6" font-size="11.4">0</text>
<text x="231.3" y="697.5" text-anchor="end" fill="#e6e6e6" font-size="11.4">-1K</text>
<text x="234.5" y="717" text-anchor="middle" fill="#d0d0d0" font-size="10.3">May 09</text>
<text x="287.37" y="717" text-anchor="middle" fill="#d0d0d0" font-size="10.3">May 11</text>
<text x="340.24" y="717" text-anchor="middle" fill="#d0d0d0" font-size="10.3">May 13</text>
<text x="393.11" y="717" text-anchor="middle" fill="#d0d0d0" font-size="10.3">May 15</text>
<text x="445.98" y="717" text-anchor="middle" fill="#d0d0d0" font-size="10.3">May 17</text>
<text x="498.85" y="717" text-anchor="middle" fill="#d0d0d0" font-size="10.3">May 19</text>
<text x="551.73" y="717" text-anchor="middle" fill="#d0d0d0" font-size="10.3">May 21</text>
<text x="604.6" y="717" text-anchor="middle" fill="#d0d0d0" font-size="10.3">May 23</text>
<text x="657.47" y="717" text-anchor="middle" fill="#d0d0d0" font-size="10.3">May 25</text>
<text x="710.34" y="717" text-anchor="middle" fill="#d0d0d0" font-size="10.3">May 27</text>
<text x="763.21" y="717" text-anchor="middle" fill="#d0d0d0" font-size="10.3">May 29</text>
<text x="816.08" y="717" text-anchor="middle" fill="#d0d0d0" font-size="10.3">May 31</text>
<text x="868.95" y="717" text-anchor="middle" fill="#d0d0d0" font-size="10.3">Jun 02</text>
<text x="921.82" y="717" text-anchor="middle" fill="#d0d0d0" font-size="10.3">Jun 04</text>
<text x="974.69" y="717" text-anchor="middle" fill="#d0d0d0" font-size="10.3">Jun 06</text>
<text x="1027.56" y="717" text-anchor="middle" fill="#d0d0d0" font-size="10.3">Jun 08</text>
<text transform="translate(201.6 614.4) rotate(-90)" text-anchor="middle" fill="#e6e6e6" font-size="11.1">Revenue ($)</text>
</svg>
</div>
</body></html>
